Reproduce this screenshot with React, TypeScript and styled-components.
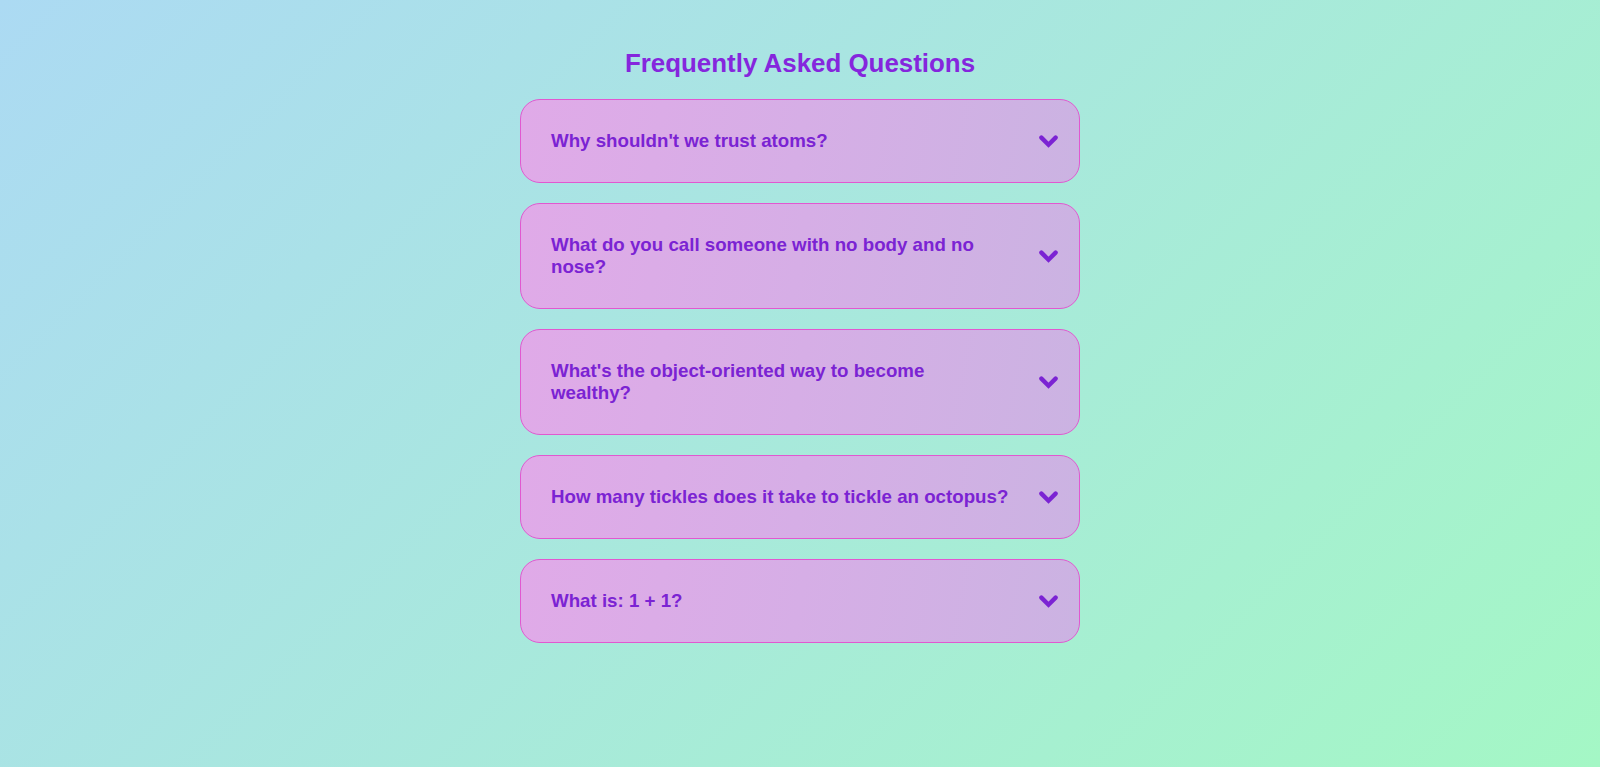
import React from "react";
import styled, { createGlobalStyle } from "styled-components";

const GlobalStyle = createGlobalStyle`
  html, body {
    margin: 0;
    padding: 0;
  }
  body {
    min-height: 767px;
    font-family: "Liberation Sans", Arial, sans-serif;
    background: linear-gradient(135deg, #acdaf3 0%, #a4f7c5 100%);
    background-attachment: fixed;
  }
`;

const Page = styled.main`
  min-height: 767px;
  box-sizing: border-box;
  padding-top: 49px;
  display: flex;
  flex-direction: column;
  align-items: center;
`;

const Title = styled.h2`
  margin: 0 0 21px;
  font-size: 25.9px;
  line-height: normal;
  font-weight: 700;
  color: #8526dd;
  text-align: center;
`;

const List = styled.div`
  width: 560px;
  display: flex;
  flex-direction: column;
  gap: 20px;
`;

const Card = styled.div`
  box-sizing: border-box;
  width: 100%;
  border: 1px solid #e158d0;
  border-radius: 20px;
  background: linear-gradient(100deg, #e0aae8 0%, #d6aee6 50%, #cbb3e2 100%);
  padding: 30px 21px 30px 30px;
  display: flex;
  align-items: center;
  justify-content: space-between;
  cursor: pointer;
`;

const Question = styled.h3`
  margin: 0;
  max-width: 458.3px;
  font-size: 18.72px;
  line-height: normal;
  font-weight: 700;
  color: #7b23d3;
`;

const Chevron = styled.svg`
  flex: none;
  width: 19px;
  height: 13px;
  color: #7b23d3;
`;

const ChevronIcon = () => (
  <Chevron viewBox="0 0 19 13" aria-hidden="true">
    <path
      d="M2.4 2.6 L9.5 9.7 L16.6 2.6"
      fill="none"
      stroke="currentColor"
      strokeWidth="4.4"
      strokeLinecap="round"
      strokeLinejoin="miter"
    />
  </Chevron>
);

const questions = [
  "Why shouldn't we trust atoms?",
  "What do you call someone with no body and no nose?",
  "What's the object-oriented way to become wealthy?",
  "How many tickles does it take to tickle an octopus?",
  "What is: 1 + 1?",
];

export default function App() {
  return (
    <>
      <GlobalStyle />
      <Page>
        <Title>Frequently Asked Questions</Title>
        <List>
          {questions.map((q) => (
            <Card key={q}>
              <Question>{q}</Question>
              <ChevronIcon />
            </Card>
          ))}
        </List>
      </Page>
    </>
  );
}
